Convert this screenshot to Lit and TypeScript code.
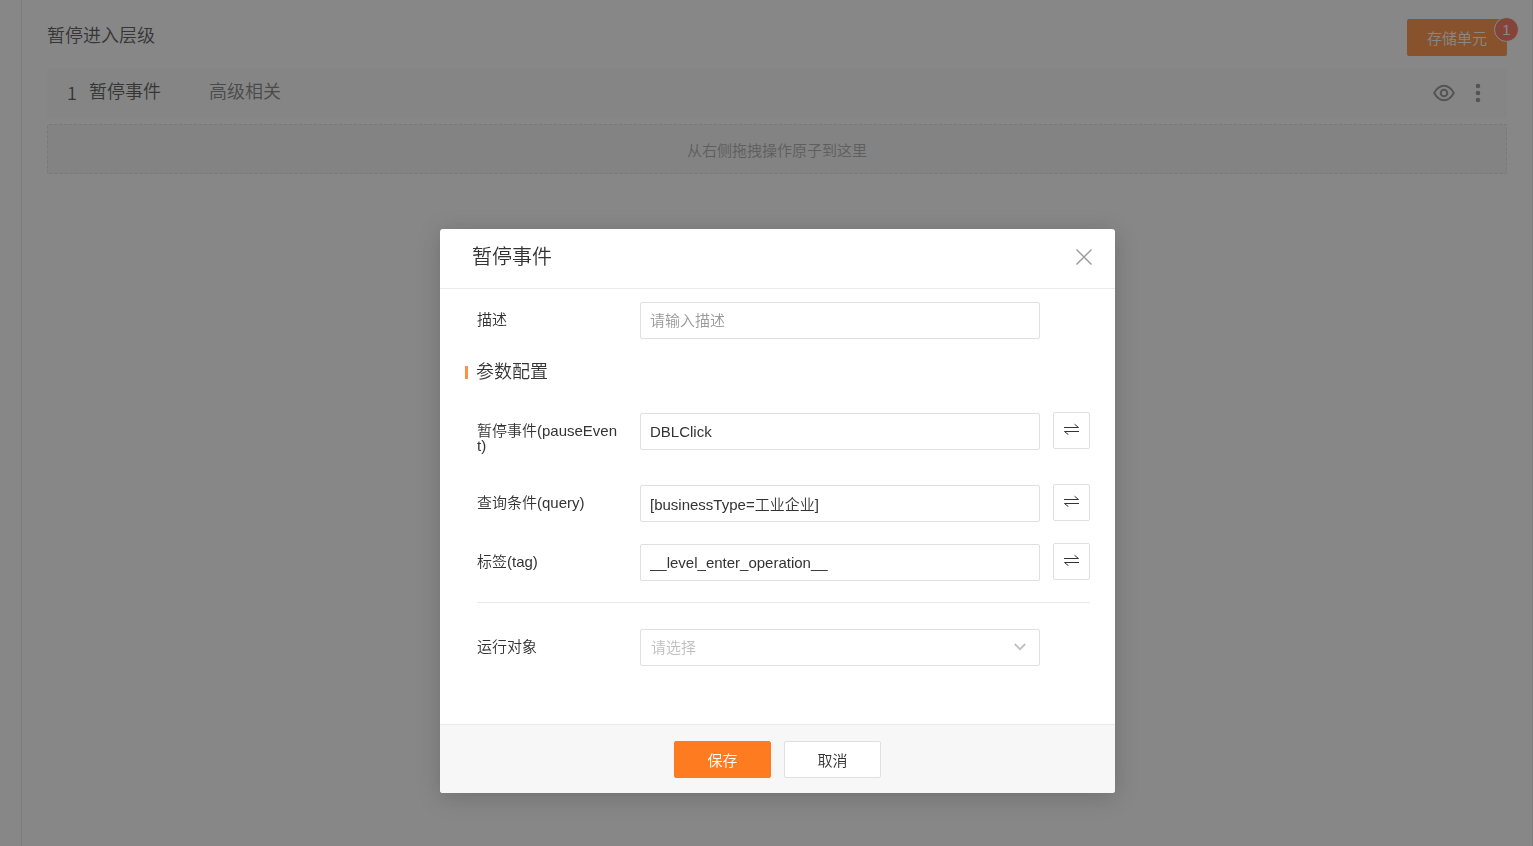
import { LitElement, html, css, svg } from "lit";
import { customElement, property, state } from "lit/decorators.js";

interface Param {
  id: string;
  label: string;
  value: string;
}

const eyeIcon = svg`<svg width="22" height="18" viewBox="0 0 22 18" fill="none" stroke="currentColor" stroke-width="2" aria-hidden="true">
  <path d="M1.2 9C3.8 4.2 7.2 1.8 11 1.8S18.2 4.2 20.8 9C18.2 13.8 14.8 16.2 11 16.2S3.800 13.8 1.2 9Z" stroke-linejoin="round" />
  <circle cx="11" cy="9" r="3.300" />
</svg>`;

const moreIcon = svg`<svg width="6" height="20" viewBox="0 0 6 20" fill="currentColor" aria-hidden="true">
  <circle cx="3" cy="3" r="2.300" /><circle cx="3" cy="10" r="2.300" /><circle cx="3" cy="17" r="2.300" />
</svg>`;

const closeIcon = svg`<svg width="16" height="16" viewBox="0 0 16 16" fill="none" stroke="currentColor" stroke-width="1.400" aria-hidden="true">
  <path d="M0.500 0.500L15.500 15.500M15.500 0.500L0.500 15.500" />
</svg>`;

const swapIcon = svg`<svg width="16" height="12" viewBox="0 0 16 12" fill="none" stroke="currentColor" stroke-width="1" aria-hidden="true">
  <path d="M0 4.500H14.500L10.500 1.200M15 8.500H0.500L4.500 11.800" />
</svg>`;

const chevronIcon = svg`<svg class="chevron" width="12" height="8" viewBox="0 0 12 8" fill="none" stroke="currentColor" stroke-width="1.800" aria-hidden="true">
  <path d="M0.800 1L6 6.200L11.200 1" />
</svg>`;

@customElement("param-row")
class ParamRow extends LitElement {
  @property({ attribute: false }) param!: Param;

  static styles = css`
    :host {
      display: block;
      margin-bottom: 21px;
      padding-left: 12px;
    }
    .row {
      display: grid;
      grid-template-columns: 150px 1fr 37px;
      column-gap: 13px;
      align-items: start;
    }
    .label {
      padding: 11px 7px 10px 0;
      line-height: 15px;
      word-break: break-all;
    }
    .field {
      padding-top: 1px;
    }
    .input {
      display: block;
      box-sizing: border-box;
      width: 100%;
      height: 37px;
      padding: 0 9px;
      border: 1px solid #dfdfdf;
      border-radius: 2px;
      background: #fff;
      color: #333;
      font: inherit;
      outline: none;
    }
    .swap {
      display: flex;
      align-items: center;
      justify-content: center;
      width: 37px;
      height: 37px;
      padding: 0 0 3px;
      border: 1px solid #dfdfdf;
      border-radius: 2px;
      background: #fff;
      color: #333;
    }
  `;

  render() {
    const { id, label, value } = this.param;
    return html`<div class="row">
      <label class="label" for=${id}>${label}</label>
      <div class="field"><input class="input" id=${id} type="text" .value=${value} /></div>
      <button class="swap" type="button" aria-label="切换">${swapIcon}</button>
    </div>`;
  }
}

@customElement("app-root")
class AppRoot extends LitElement {
  @state() private params: Param[] = [
    { id: "pauseEvent", label: "暂停事件(pauseEvent)", value: "DBLClick" },
    { id: "query", label: "查询条件(query)", value: "[businessType=工业企业]" },
    { id: "tag", label: "标签(tag)", value: "__level_enter_operation__" },
  ];

  static styles = css`
    :host {
      display: block;
      font-family: "Liberation Sans", "Noto Sans CJK SC", sans-serif;
      font-size: 15px;
      font-weight: 350;
      color: #333;
    }
    .page {
      display: flex;
      min-height: 100vh;
      background: #fff;
    }
    .side {
      box-sizing: border-box;
      width: 22px;
      border-right: 1px solid #e6e6e6;
    }
    .main {
      flex: 1;
      padding: 19px 25px 0;
      border-right: 1px solid #e6e6e6;
    }
    .top {
      display: flex;
      justify-content: space-between;
      align-items: flex-start;
      margin-bottom: 12px;
    }
    .heading {
      margin: 0;
      font-size: 18px;
      font-weight: inherit;
      line-height: 34px;
    }
    .storage {
      position: relative;
      height: 37px;
      width: 100px;
      padding: 0;
      border: 0;
      border-radius: 2px;
      background: #ff7b1d;
      color: #fff;
      font: inherit;
    }
    .badge {
      position: absolute;
      top: -2px;
      right: -12px;
      box-sizing: border-box;
      width: 25px;
      height: 25px;
      border: 1px solid #fff;
      border-radius: 50%;
      background: #f7583c;
      line-height: 23px;
      text-align: center;
    }
    .event {
      display: flex;
      align-items: center;
      height: 50px;
      margin-bottom: 6px;
      padding: 0 26px 0 20px;
      border-radius: 2px;
      background: #f9f9f9;
      font-size: 18px;
      line-height: 48px;
    }
    .index,
    .name,
    .note {
      height: 50px;
    }
    .index {
      width: 22px;
      font-family: "Noto Sans CJK SC", sans-serif;
    }
    .name {
      width: 120px;
    }
    .note {
      flex: 1;
      color: #666;
    }
    .tool {
      display: flex;
      margin-left: 20px;
      padding: 0;
      border: 0;
      background: none;
      color: #808080;
    }
    .drop {
      box-sizing: border-box;
      height: 50px;
      border: 1px dashed #dcdcdc;
      border-radius: 2px;
      background: #f4f4f4;
      color: #999;
      line-height: 51px;
      text-align: center;
    }
    .mask {
      position: fixed;
      inset: 0;
      display: flex;
      justify-content: center;
      align-items: flex-start;
      padding: 229px 0 0 22px;
      background: rgba(55, 55, 55, 0.6);
    }
    .dialog {
      width: 675px;
      border-radius: 3px;
      background: #fff;
      box-shadow: 0 4px 24px rgba(0, 0, 0, 0.18);
      overflow: hidden;
    }
    .header {
      display: flex;
      justify-content: space-between;
      align-items: center;
      padding: 14px 23px 17px 32px;
      border-bottom: 1px solid #e9e9e9;
    }
    .title {
      margin: 0;
      font-size: 20px;
      font-weight: inherit;
      line-height: 28px;
    }
    .close {
      display: flex;
      padding: 0;
      border: 0;
      background: none;
      color: #999;
    }
    .body {
      padding: 12px 25px 58px;
    }
    .row {
      display: grid;
      grid-template-columns: 150px 1fr 37px;
      column-gap: 13px;
      align-items: start;
      padding-left: 12px;
    }
    .label {
      padding: 11px 7px 10px 0;
      line-height: 15px;
    }
    .field {
      position: relative;
      padding-top: 1px;
    }
    .input {
      display: block;
      box-sizing: border-box;
      width: 100%;
      height: 37px;
      padding: 0 9px;
      border: 1px solid #dfdfdf;
      border-radius: 2px;
      background: #fff;
      color: #333;
      font: inherit;
      outline: none;
    }
    .input::placeholder {
      color: #999;
      opacity: 1;
    }
    .select {
      appearance: none;
      padding: 0 30px 0 10px;
      color: #c0c0c0;
    }
    .chevron {
      position: absolute;
      top: 15px;
      right: 14px;
      color: #c0c0c0;
      pointer-events: none;
    }
    .section {
      display: flex;
      align-items: center;
      gap: 8px;
      margin: 21px 0 28px;
      font-size: 18px;
      font-weight: inherit;
      line-height: 24px;
    }
    .section::before {
      content: "";
      width: 3px;
      height: 13px;
      background: #ff9145;
    }
    .divider {
      height: 1px;
      margin: 0 0 25px 12px;
      border: 0;
      background: #e9e9e9;
    }
    .footer {
      display: flex;
      justify-content: center;
      gap: 13px;
      padding: 16px 0 15px;
      border-top: 1px solid #e9e9e9;
      background: #f7f7f7;
    }
    .button {
      width: 97px;
      height: 37px;
      padding: 0;
      border: 1px solid #dfdfdf;
      border-radius: 2px;
      background: #fff;
      color: #333;
      font: inherit;
    }
    .primary {
      border-color: #ff7b1f;
      background: #ff7b1f;
      color: #fff;
    }
  `;

  render() {
    return html`
      <div class="page">
        <div class="side"></div>
        <main class="main">
          <div class="top">
            <h1 class="heading">暂停进入层级</h1>
            <button class="storage" type="button">存储单元<span class="badge">1</span></button>
          </div>
          <div class="event">
            <span class="index">1</span>
            <span class="name">暂停事件</span>
            <span class="note">高级相关</span>
            <button class="tool" type="button" aria-label="查看">${eyeIcon}</button>
            <button class="tool" type="button" aria-label="更多">${moreIcon}</button>
          </div>
          <div class="drop">从右侧拖拽操作原子到这里</div>
        </main>
      </div>
      <div class="mask">
        <form class="dialog" role="dialog" aria-labelledby="title" @submit=${(e: Event) => e.preventDefault()}>
          <header class="header">
            <h2 class="title" id="title">暂停事件</h2>
            <button class="close" type="button" aria-label="关闭">${closeIcon}</button>
          </header>
          <div class="body">
            <div class="row">
              <label class="label" for="desc">描述</label>
              <div class="field"><input class="input" id="desc" type="text" placeholder="请输入描述" /></div>
            </div>
            <h3 class="section">参数配置</h3>
            ${this.params.map((p) => html`<param-row .param=${p}></param-row>`)}
            <hr class="divider" />
            <div class="row">
              <label class="label" for="target">运行对象</label>
              <div class="field">
                <select class="input select" id="target">
                  <option value="">请选择</option>
                </select>
                ${chevronIcon}
              </div>
            </div>
          </div>
          <footer class="footer">
            <button class="button primary" type="submit">保存</button>
            <button class="button" type="button">取消</button>
          </footer>
        </form>
      </div>
    `;
  }
}
